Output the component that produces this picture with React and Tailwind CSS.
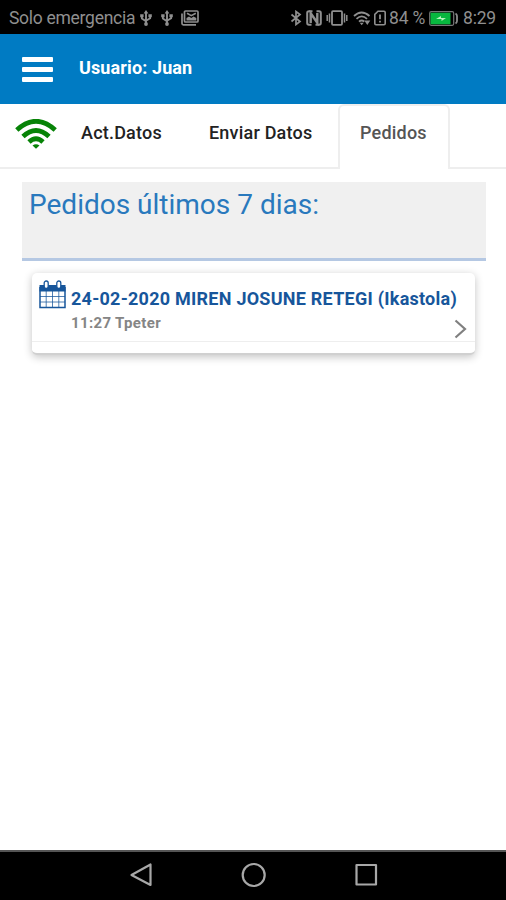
import React from 'react';

const UsbIcon = () => (
  <svg className="h-4 w-3 shrink-0" viewBox="0 0 12 16" fill="none" stroke="currentColor" strokeWidth="1.9">
    <path d="M6 2.5V14M1.9 6v2.5L6 11.2M10.1 6v2.2L6 10.8" />
    <path d="M6 0l2.4 3.4H3.6zM.2 4.3h3.4v3H.2zM8.4 4.3h3.4v3H8.4z" fill="currentColor" stroke="none" />
    <circle cx="6" cy="14" r="1.9" fill="currentColor" stroke="none" />
  </svg>
);

const GalleryIcon = () => (
  <svg className="h-4 w-[18px] shrink-0" viewBox="0 0 18 16" fill="none" stroke="currentColor" strokeWidth="1.7">
    <rect x="3.5" y="1" width="13.5" height="11" rx="1" />
    <path d="M1 3.5v10q0 1.3 1.3 1.3H15" />
    <path d="M5.5 10.5V8l2.500-1.500 2.300 1.500 2.300-1.500L15.300 8v2.500z" fill="currentColor" stroke="none" />
    <path d="M6 3.200l4.300 2.500 4.500-2.500" strokeWidth="1.600" />
  </svg>
);

const BluetoothIcon = () => (
  <svg className="h-4 w-3 shrink-0" viewBox="0 0 12 16" fill="none" stroke="currentColor" strokeWidth="1.7">
    <path d="M1.5 4.5l8.5 7L6 14.5v-13l4 3-8.500 7" />
  </svg>
);

const NfcIcon = () => (
  <svg className="h-4 w-4 shrink-0" viewBox="0 0 16 16" fill="none" stroke="currentColor" strokeWidth="2">
    <path d="M6.5 1.2H3Q1.2 1.2 1.2 3v10q0 1.8 1.8 1.8h2.500M9.500 14.800H13q1.800 0 1.800-1.800V3q0-1.800-1.800-1.800h-2.500" />
    <path d="M4.700 13V3.200l6.600 9.600V3" strokeWidth="2.400" />
  </svg>
);

const VibrateIcon = () => (
  <svg className="h-4 w-[22px] shrink-0" viewBox="0 0 22 16" fill="none" stroke="currentColor" strokeWidth="1.8">
    <rect x="6" y="1.2" width="10" height="13.6" rx="1" />
    <path d="M3.5 3.5v9M18.5 3.5v9M1.2 5v6M20.8 5v6" strokeWidth="1.5" />
  </svg>
);

const StatusWifiIcon = () => (
  <svg className="h-4 w-[18px] shrink-0" viewBox="0 0 18 16" fill="none" stroke="currentColor" strokeWidth="1.8">
    <path d="M1 6Q8.5-1 16.5 6M3.5 8.8Q8.7 4 14 8.8M6 11.6q2.7-2.3 5.3 0" />
    <path d="M6.7 12.7h4l-2 2.5zM11.3 10.5h6l-3 4.5z" fill="currentColor" stroke="none" />
  </svg>
);

const SimIcon = () => (
  <svg className="h-4 w-3 shrink-0" viewBox="0 0 12 16" fill="none" stroke="currentColor" strokeWidth="1.6">
    <path d="M4 1.2h6q1.2 0 1.2 1.2v11.2q0 1.2-1.2 1.2H2q-1.2 0-1.2-1.2V4.4z" />
    <path d="M6 4.5v4.8M6 10.8v1.6" strokeWidth="1.8" />
  </svg>
);

const BatteryIcon = () => (
  <svg className="h-[15px] w-[29px] shrink-0" viewBox="0 0 29 15" fill="none">
    <rect x=".7" y=".7" width="24" height="13.6" rx="1.5" stroke="#777" strokeWidth="1.2" />
    <rect x="1.5" y="1.7" width="20" height="11.6" fill="#08b83f" />
    <path d="M7 8l5-3v2h5l-4.5 3V8z" fill="#b5f5bd" />
    <path d="M26.5 2.5q1.500 1 1.500 2.500v5q0 1.500-1.500 2.500" stroke="#8c8c8c" strokeWidth="1.800" />
  </svg>
);

const WifiIcon = () => (
  <svg className="h-[30px] w-[42px] shrink-0" viewBox="0 0 42 30" fill="none" stroke="#078307" strokeWidth="4.8">
    <path d="M1.8 11Q21-6.3 40.2 11M8 17.5Q21 5.5 34 17.5M14 23q7-6.3 14 0" />
    <path d="M17.5 26.5q3.5-2.5 7 0L21 29.8z" fill="#078307" stroke="none" />
  </svg>
);

const CalendarIcon = () => (
  <svg className="h-[29px] w-[27px] shrink-0" viewBox="0 0 27 29" fill="none" stroke="#17569b">
    <path d="M.5 5h26v6.5H.5z" fill="#17569b" stroke="none" />
    <path d="M1 7v20.500h25V7" strokeWidth="1.5" />
    <path d="M7.2 11v16M13.5 11v16M19.8 11v16M1 16.5h25M1 22h25" strokeWidth="1" strokeOpacity=".75" />
    <rect x="5.2" y="1" width="4" height="7.5" rx="2" fill="#fff" strokeWidth="1.3" />
    <rect x="17.8" y="1" width="4" height="7.5" rx="2" fill="#fff" strokeWidth="1.3" />
  </svg>
);

function StatusBar() {
  return (
    <div className="flex h-[34px] items-center bg-black pt-[2px] pl-[9px] text-[17.5px] text-[#8f8f8f]">
      <span className="w-[131px] tracking-[-0.28px] whitespace-nowrap">Solo emergencia</span>
      <div className="flex items-center gap-[9px]">
        <UsbIcon />
        <UsbIcon />
        <div className="-ml-[1px]"><GalleryIcon /></div>
      </div>
      <div className="ml-[91px] flex items-center gap-[4px]">
        <BluetoothIcon />
        <NfcIcon />
        <VibrateIcon />
        <div className="ml-[1px]"><StatusWifiIcon /></div>
        <div className="ml-[-1px]"><SimIcon /></div>
      </div>
      <span className="ml-[3px] w-[40px] tracking-[-0.2px] whitespace-nowrap">84 %</span>
      <BatteryIcon />
      <span className="ml-[5px] tracking-[-0.2px]">8:29</span>
    </div>
  );
}

function Header() {
  return (
    <header className="flex h-[70px] items-center bg-[#007bc3] pl-[22px]">
      <button className="flex w-[31px] flex-col gap-[5px]" aria-label="Menu">
        <span className="h-[5px] w-full rounded-[1px] bg-white" />
        <span className="h-[5px] w-full rounded-[1px] bg-white" />
        <span className="h-[5px] w-full rounded-[1px] bg-white" />
      </button>
      <h1 className="mb-[3px] ml-[26px] text-[18px] font-bold tracking-[0.12px] text-white">Usuario: Juan</h1>
    </header>
  );
}

function Tabs() {
  return (
    <nav className="flex h-[65px] text-[18px] font-medium tracking-[0.2px] text-[#222]">
      <div className="flex w-[338px] border-b-2 border-[#eee] pt-[15px] pl-[15px]">
        <WifiIcon />
        <a href="#datos" className="ml-[24px] w-[128px]">Act.Datos</a>
        <a href="#enviar">Enviar Datos</a>
      </div>
      <a href="#pedidos" className="w-[112px] rounded-t-md border-x-2 border-t-2 border-[#eee] pt-[13px] pl-[20px] text-[#555]">Pedidos</a>
      <div className="flex-1 border-b-2 border-[#eee]" />
    </nav>
  );
}

function OrderCard() {
  return (
    <div className="mr-[9px] ml-[10px] mt-[12px] h-[82px] rounded-[5px] border-b-2 border-[#d0d0d0] bg-white shadow-[0_2px_8px_rgba(0,0,0,0.24)]">
      <div className="flex h-[69px] border-b border-[#eee] pt-[7px] pl-[7px]">
        <CalendarIcon />
        <div className="ml-[5px] min-w-0 flex-1 pt-[5px]">
          <p className="text-[18px] leading-[27px] font-bold tracking-[0.25px] whitespace-nowrap text-[#17569b]">24-02-2020 MIREN JOSUNE RETEGI (Ikastola)</p>
          <p className="text-[15px] leading-[22px] font-bold tracking-[0.35px] text-[#858585]">11:27 Tpeter</p>
        </div>
        <svg className="mt-[39px] mr-[8px] h-[20px] w-[13px] shrink-0" viewBox="0 0 13 20" fill="none" stroke="#808080" strokeWidth="2.2">
          <path d="M1.5 1.5L11 10l-9.500 8.500" />
        </svg>
      </div>
    </div>
  );
}

export default function App() {
  return (
    <div className="flex h-[900px] w-[506px] flex-col overflow-hidden bg-white font-[Roboto,sans-serif]">
      <StatusBar />
      <Header />
      <Tabs />
      <main className="flex-1 px-[22px] pt-[13px]">
        <div className="mr-[-2px] h-[79px] border-b-[3px] border-[#b5c8e3] bg-[#f0f0f0] pt-[2px] pl-[7px]">
          <h2 className="text-[28px] leading-[42px] text-[#2979bd]">Pedidos últimos 7 dias:</h2>
        </div>
        <OrderCard />
      </main>
      <footer className="h-[50px] border-t-2 border-[#555] bg-black">
        <svg className="h-[48px] w-[506px]" viewBox="0 0 506 48" fill="none" stroke="#a8a8a8" strokeWidth="2.2" strokeLinejoin="round">
          <path d="M150.5 12.5v20.500L131.500 23z" />
          <circle cx="253.7" cy="23" r="11" />
          <rect x="356.5" y="13" width="19.5" height="19.5" />
        </svg>
      </footer>
    </div>
  );
}
